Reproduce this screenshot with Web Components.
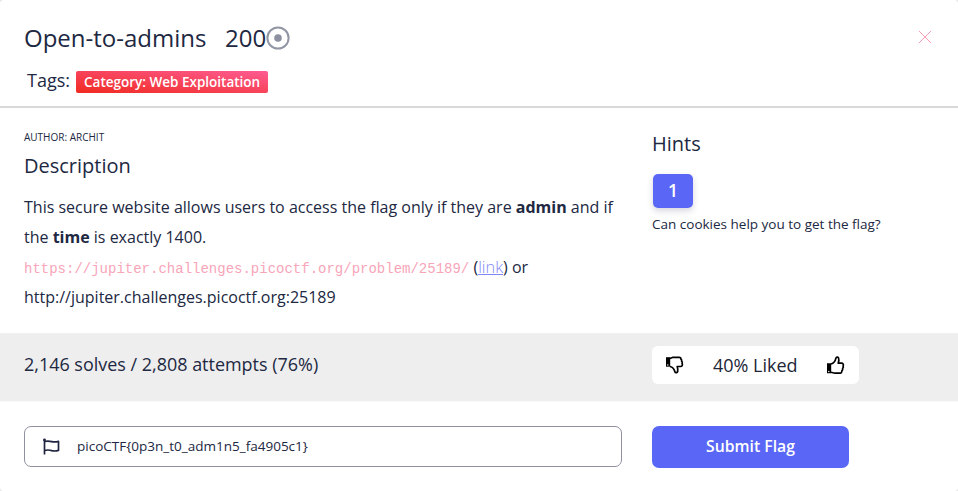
<!DOCTYPE html>
<html lang="en">
<head>
<meta charset="utf-8">
<title>Open-to-admins</title>
<style>
body{margin:0;background:#e8e8e8;font-family:"Open Sans","Noto Sans",sans-serif;color:#212842;width:958px;height:491px;overflow:hidden}
</style>
</head>
<body>
<challenge-card></challenge-card>
<script>
function define(name, html){
  const t=document.createElement('template');
  t.innerHTML=html;
  customElements.define(name, class extends HTMLElement{
    constructor(){super();this.attachShadow({mode:'open'}).append(t.content.cloneNode(true));}
  });
}

define('category-tag', `
<style>
:host{display:block;box-sizing:border-box;width:192px;height:22px;border-radius:2px;padding-left:8px;background:linear-gradient(to top right,#f02a20,#ff5c93);color:#fff;font-size:13.5px;font-weight:600;line-height:23px;white-space:nowrap}
</style><slot></slot>`);

define('challenge-header', `
<style>
:host{display:block;box-sizing:border-box;height:108px;padding:22px 24px 0;border-bottom:2px solid #d8d8d8}
.top{display:flex;height:32px;line-height:32px;font-size:24px;white-space:nowrap}
.name{width:201px}
.pts{width:41px}
.coin{margin-top:4px}
.close{margin:8px 2px 0 auto}
.tags{display:flex;align-items:center;height:22px;margin-top:17px;padding-left:3px}
.label{width:49px;font-size:18px;line-height:22px;margin-top:-4px}
svg{display:block}
</style>
<div class="top">
<span class="name">Open-to-admins</span><span class="pts">200</span>
<svg class="coin" width="24" height="24" viewBox="0 0 24 24"><circle cx="12" cy="12" r="10.6" fill="none" stroke="#9295a3" stroke-width="2"/><circle cx="12" cy="12" r="3.8" fill="#8c90a0"/></svg>
<svg class="close" width="14" height="14" viewBox="0 0 14 14"><path d="M1 1L13 13M13 1L1 13" stroke="#fb9fb5" stroke-width="1"/></svg>
</div>
<div class="tags"><span class="label">Tags:</span><category-tag><slot name="tag"></slot></category-tag></div>`);

define('challenge-description', `
<style>
:host{display:block;width:598px}
.author{font-size:10px;line-height:14px;margin-top:22px;height:14px}
h2{font-weight:400;font-size:20px;line-height:28px;margin:8px 0 12px}
p{margin:0;font-size:16px;line-height:30px;white-space:nowrap}
b{font-weight:700}
code{font:14px/1 "Liberation Mono",monospace;color:#f7a5b9}
a{color:#7f87f5;font-weight:300;font-size:16.3px;line-height:1;text-decoration:underline}
</style>
<div class="author">AUTHOR: ARCHIT</div>
<h2>Description</h2>
<p>This secure website allows users to access the flag only if they are <b>admin</b> and if<br>the <b>time</b> is exactly 1400.<br><code>https://jupiter.challenges.picoctf.org/problem/25189/</code> (<a>link</a>) or<br>http://jupiter.challenges.picoctf.org:25189</p>`);

define('challenge-hints', `
<style>
:host{display:block;width:282px}
h2{font-weight:400;font-size:20px;line-height:28px;margin:22px 0 15.5px}
.num{margin-left:1px;width:40px;height:34px;border-radius:5px;background:#5a67f6;color:#fff;font-size:17.5px;font-weight:600;line-height:33px;text-align:center;box-shadow:0 3px 6px rgba(50,50,93,.2)}
p{margin:6.5px 0 0;font-size:13.5px;line-height:20px}
</style>
<h2>Hints</h2><div class="num">1</div><p><slot></slot></p>`);

define('like-meter', `
<style>
:host{display:flex;box-sizing:border-box;width:207px;height:38px;border-radius:6px;background:#fff;align-items:center;justify-content:space-between;padding:0 13.5px 0 13px;margin-top:.4px;font-size:18px;color:#222638}
svg{display:block}
span{white-space:nowrap;line-height:36px}
</style>
<svg width="20" height="20" viewBox="0 0 20 20"><path d="M1 2.2h4.2v9.5H1z"/><circle cx="2.8" cy="10" r=".7" fill="#fff"/><path d="M5 3L8 1.8h6.3c1 0 1.7.8 1.6 1.7.8.6 1 1.4.7 2.2.8.7.9 1.5.5 2.3.8 1.6 0 3-1.6 3h-3.3c.6 2 .9 3.4.5 5-.3 1.4-2.4 1.7-2.8.2C9.3 13.8 7 11.5 5 11" fill="none" stroke="#000" stroke-width="1.7" stroke-linejoin="round" transform="translate(0 .5)"/></svg>
<span><slot></slot></span>
<svg width="20" height="20" viewBox="0 0 20 20"><path d="M1 8.3h4.2v10H1z"/><circle cx="2.8" cy="16.5" r=".7" fill="#fff"/><path d="M5 9c2-.5 4.3-2.8 4.9-5.8.4-1.5 2.5-1.2 2.8.2.4 1.6.1 3-.5 4.8h3.3c1.6 0 2.4 1.4 1.6 3 .4.8.3 1.6-.5 2.3.3.8.1 1.6-.7 2.2.1 1-.6 2.5-1.6 2.5H9L5 17.2" fill="none" stroke="#000" stroke-width="1.7" stroke-linejoin="round"/></svg>`);

define('challenge-stats', `
<style>
:host{display:flex;box-sizing:border-box;height:69px;padding:12px 24px 0;background:#eee;border:solid #f2f2f2;border-width:1px 0;border-bottom-color:#fafafa;margin-bottom:-1px}
.solves{width:628px;font-size:17.97px;line-height:36px;white-space:nowrap}
</style>
<span class="solves"><slot></slot></span><like-meter>40% Liked</like-meter>`);

define('flag-input', `
<style>
:host{display:flex;box-sizing:border-box;width:598px;height:41px;border:1px solid #8f919f;border-radius:7px;align-items:center;padding-left:17px;font-size:13.53px}
svg{display:block;width:18px;margin-right:17px}
span{line-height:38px;margin-top:-1px}
</style>
<svg height="18" viewBox="0 0 18 18"><path d="M2.5 1.5v15M2.5 3.5c2.8-.8 4.8-.6 7.3.1 2.5.7 4.3.4 6.7-.2v9c-2.4.7-4.3.9-6.7.2-2.5-.8-4.5-.9-7.3-.1" fill="none" stroke="#1f2340" stroke-width="1.7" stroke-linejoin="round"/><circle cx="2.5" cy="1.9" r="1.4" fill="#1f2340"/></svg>
<span><slot></slot></span>`);

define('submit-button', `
<style>
:host{display:block;width:197px;height:42px;border-radius:7px;background:#5a67f6;color:#fff;font-size:15.75px;font-weight:600;line-height:41px;text-align:center;margin-top:-.4px}
</style><slot></slot>`);

define('challenge-card', `
<style>
:host{display:flex;flex-direction:column;width:958px;height:491px;background:#fff;border-radius:4px;overflow:hidden}
.body{display:flex;gap:30px;padding:0 24px;height:225px}
.foot{display:flex;gap:30px;padding:25px 24px 0}
</style>
<challenge-header><span slot="tag">Category: Web Exploitation</span></challenge-header>
<div class="body"><challenge-description></challenge-description><challenge-hints>Can cookies help you to get the flag?</challenge-hints></div>
<challenge-stats>2,146 solves / 2,808 attempts (76%)</challenge-stats>
<div class="foot"><flag-input>picoCTF{0p3n_t0_adm1n5_fa4905c1}</flag-input><submit-button>Submit Flag</submit-button></div>`);
</script>
</body>
</html>
